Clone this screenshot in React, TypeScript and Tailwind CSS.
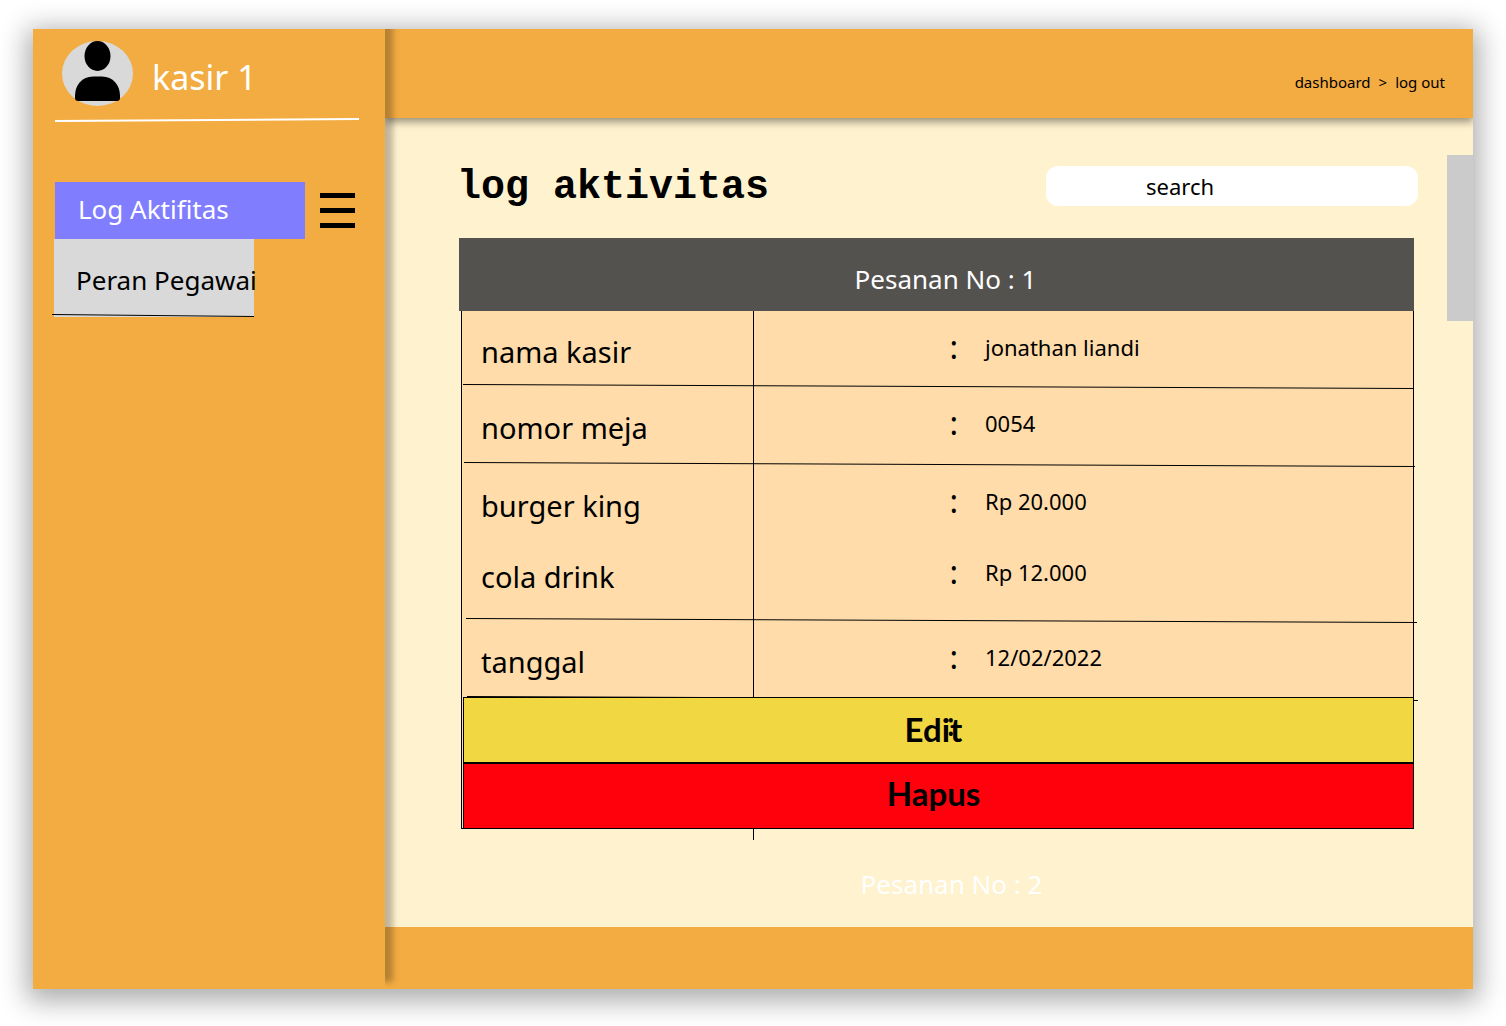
const rows = [
  { label: "nama kasir", value: "jonathan liandi", height: "h-[76px]", rule: "left-px -bottom-0.5" },
  { label: "nomor meja", value: "0054", height: "h-[78px]", rule: "left-0.5 -bottom-0.5" },
  { label: "burger king", value: "Rp 20.000", height: "h-[71px]", rule: "" },
  { label: "cola drink", value: "Rp 12.000", height: "h-[85px]", rule: "left-1 -bottom-0.5" },
  { label: "tanggal", value: "12/02/2022", height: "h-[76px]", rule: "left-[5px] -bottom-1" },
];

function Avatar() {
  return (
    <svg viewBox="0 0 71 65" className="h-[65px] w-[71px] shrink-0" aria-hidden="true">
      <ellipse cx="35.5" cy="32.5" rx="35.5" ry="32.5" fill="#d9d9d9" />
      <ellipse cx="35.5" cy="15" rx="13" ry="15" />
      <path d="M13 57V55C13 44 20 35.500 31 35.500H40C51 35.500 58 44 58 55V57Q58 60 55 60H16Q13 60 13 57Z" />
    </svg>
  );
}

export default function App() {
  return (
    <div className="flex min-h-screen bg-white px-[33px] pt-[29px] pb-[37px] font-['Noto_Sans',sans-serif] text-black">
      <div className="flex flex-1 overflow-hidden shadow-[0_6px_26px_6px_rgba(0,0,0,0.33)]">
        <aside className="relative z-10 w-[352px] shrink-0 bg-[#f3ac42] shadow-[8px_-7px_6px_rgba(0,0,0,0.25)]">
          <div className="flex gap-[19px] pt-3 pl-[29px]">
            <Avatar />
            <p className="pt-3 text-[34px] leading-[48px] text-white">kasir 1</p>
          </div>
          <svg className="mt-3 ml-[22px] h-1 w-[304px]" aria-hidden="true">
            <line x1="0" y1="3" x2="100%" y2="1" stroke="white" strokeWidth="2" />
          </svg>
          <nav className="mt-[60px] flex flex-col pl-[21px]">
            <div className="flex items-center gap-[15px] pl-px">
              <a href="#log" className="flex h-[57px] w-[250px] items-center bg-[#807dff] pb-0.5 pl-[23px] text-[26px] text-white">
                Log Aktifitas
              </a>
              <button type="button" aria-label="Menu" className="flex w-[35px] flex-col gap-2.5">
                <span className="h-[5px] w-full bg-black" />
                <span className="h-[5px] w-full bg-black" />
                <span className="h-[5px] w-full bg-black" />
              </button>
            </div>
            <a href="#peran" className="relative flex h-[78px] w-[200px] items-center bg-[#d9d9d9] pt-1 pl-[22px] text-[26px] whitespace-nowrap">
              Peran Pegawai
              <svg className="absolute right-0 bottom-0 h-[3px] w-[202px]" aria-hidden="true">
                <line x1="0" y1="0.5" x2="100%" y2="2.5" stroke="black" />
              </svg>
            </a>
          </nav>
        </aside>

        <div className="flex min-w-0 flex-1 flex-col">
          <header className="relative z-[5] flex h-[89px] items-center justify-end gap-2 bg-[#f3ac42] pt-[18px] pr-7 text-[15px] shadow-[0_4px_8px_rgba(0,0,0,0.4)]">
            <a href="#dashboard">dashboard</a>
            <span>&gt;</span>
            <a href="#logout">log out</a>
          </header>

          <main className="relative flex-1 bg-[#fff2ce] pr-[59px] pb-5 pl-[74px]">
            <div className="-mr-1 -ml-0.5 flex items-center justify-between pt-10">
              <h1 className="pt-1 font-['Liberation_Mono',monospace] text-[40px] leading-[52px] font-bold whitespace-nowrap">
                log aktivitas
              </h1>
              <input
                type="text"
                aria-label="search"
                placeholder="search"
                className="h-10 w-[372px] rounded-xl bg-white pl-[100px] text-[22px] placeholder:text-black"
              />
            </div>

            <section className="mt-6">
              <h2 className="flex h-[73px] items-center justify-center bg-[#54524f] pt-2.5 pl-[18px] text-[26px] text-white">
                Pesanan No : 1
              </h2>
              <div className="relative ml-0.5 border-x border-b border-black bg-[#ffdca9]">
                <table className="w-full table-fixed border-collapse">
                  <colgroup>
                    <col className="w-[291px]" />
                    <col className="w-[232px]" />
                    <col />
                  </colgroup>
                  <tbody>
                    {rows.map((row) => (
                      <tr key={row.label} className={`relative ${row.height}`}>
                        <th scope="row" className="border-r border-black pt-[21px] pl-[19px] text-left align-top text-[29px] leading-10 font-normal">
                          {row.label}
                        </th>
                        <td className="pt-4 pr-[27px] text-right align-top text-[32px] leading-10">:</td>
                        <td className="pt-4 align-top text-[22px] leading-10">
                          {row.value}
                          {row.rule && (
                            <svg className={`absolute h-[5px] w-full ${row.rule}`} aria-hidden="true">
                              <line x1="0" y1="0.5" x2="100%" y2="4.5" stroke="black" />
                            </svg>
                          )}
                        </td>
                      </tr>
                    ))}
                  </tbody>
                </table>
                <div className="relative -mr-px -mb-px ml-px flex flex-col font-['Lato',sans-serif] text-[33px] font-bold">
                  <button type="button" className="relative h-[66px] border border-black bg-[#f1d741] pr-2.5">
                    Edit
                    <span className="absolute top-1.5 left-1/2 ml-2 font-['Noto_Sans',sans-serif] text-[32px] leading-10 font-normal">:</span>
                  </button>
                  <button type="button" className="h-[66px] border border-black bg-[#ff000d] pr-2.5 pb-1">
                    Hapus
                  </button>
                </div>
                <span className="absolute top-full left-[291px] h-3 w-px bg-black" />
              </div>
            </section>
            <h2 className="mt-[35px] pl-[30px] text-center text-[26px] leading-10 text-white">Pesanan No : 2</h2>

            <div className="absolute top-[37px] right-0 h-[166px] w-[26px] bg-[#cbcbcb]" />
          </main>

          <footer className="h-[62px] bg-[#f3ac42]" />
        </div>
      </div>
    </div>
  );
}
